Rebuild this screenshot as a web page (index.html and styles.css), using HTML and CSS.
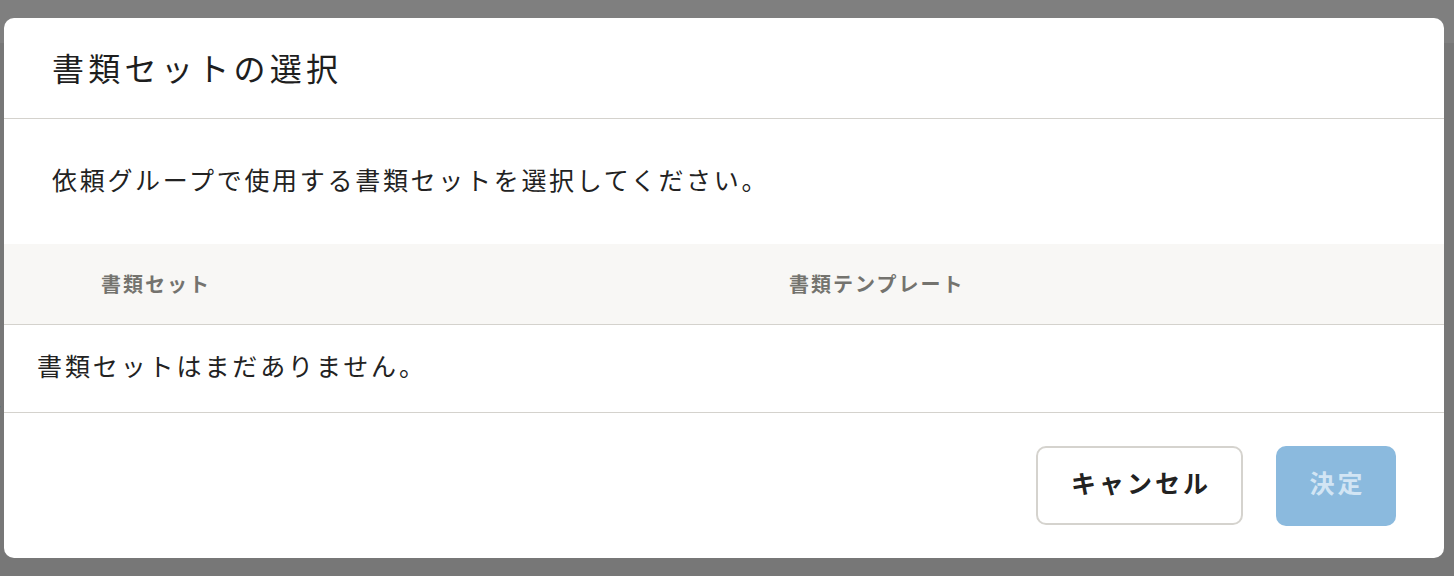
FILE: index.html
```html
<!DOCTYPE html>
<html lang="ja">

<head>
    <meta charset="UTF-8">
    <title>書類セットの選択</title>
    <link rel="stylesheet" href="styles.css">
</head>

<body>

    <div class="page">
        <div class="page-header"></div>
        <div class="page-body">
            <p class="page-line page-line-1">書類を選択します</p>
            <p class="page-line page-line-2">ありません</p>
        </div>
    </div>

    <div class="overlay">
        <div class="modal">
            <div class="modal-header">
                <h2>書類セットの選択</h2>
            </div>
            <p class="modal-intro">依頼グループで使用する書類セットを選択してください。</p>
            <div class="set-table">
                <div class="set-head">
                    <div class="set-col">書類セット</div>
                    <div class="set-col">書類テンプレート</div>
                </div>
                <div class="set-empty">書類セットはまだありません。</div>
            </div>
            <div class="modal-footer">
                <button type="button" class="btn btn-cancel">キャンセル</button>
                <button type="button" class="btn btn-primary" disabled>決定</button>
            </div>
        </div>
    </div>

</body>

</html>
```

FILE: styles.css
```css
body {
    margin: 0;
    padding: 0;
    font-family: "Noto Sans CJK JP", "Noto Sans", sans-serif;
    color: #222222;
    height: 576px;
    overflow: hidden;
}

.page {
    height: 576px;
    background-color: #eeeeee;
}

.page-header {
    height: 43px;
    background-color: #ffffff;
}

.page-body {
    padding-top: 226px;
}

.page-line {
    margin: 0 0 0 -220px;
    font-size: 24px;
    color: #222222;
}

.page-line-2 {
    margin-top: 80px;
    margin-left: -118px;
}

.overlay {
    position: absolute;
    top: 0;
    left: 0;
    right: 0;
    bottom: 0;
    background-color: rgba(0, 0, 0, 0.5);
}

.modal {
    position: absolute;
    top: 18px;
    left: 4px;
    width: 1440px;
    height: 540px;
    background-color: #ffffff;
    border-radius: 10px;
    overflow: hidden;
    display: flex;
    flex-direction: column;
}

.modal-header {
    height: 100px;
    border-bottom: 1px solid #d4d2cd;
    display: flex;
    align-items: center;
    padding-left: 48px;
}

.modal-header h2 {
    margin: 0 0 2px;
    font-size: 32px;
    font-weight: normal;
    letter-spacing: 4.3px;
    line-height: 40px;
    color: #1e1e1e;
}

.modal-intro {
    margin: 0;
    padding: 46px 48px 50px;
    font-size: 25px;
    line-height: 29px;
    letter-spacing: 2.7px;
}

.set-head {
    height: 79px;
    padding-bottom: 1px;
    display: grid;
    grid-template-columns: 688px 1fr;
    align-items: center;
    padding-left: 97px;
    background-color: #f8f7f5;
    border-bottom: 1px solid #d4d2cd;
}

.set-col {
    font-size: 20px;
    font-weight: bold;
    letter-spacing: 2px;
    color: #74736e;
}

.set-empty {
    height: 80px;
    padding-bottom: 7px;
    display: flex;
    align-items: center;
    padding-left: 33px;
    font-size: 25px;
    letter-spacing: 2.9px;
    border-bottom: 1px solid #d4d2cd;
}

.modal-footer {
    flex: 1;
    display: flex;
    justify-content: flex-end;
    align-items: center;
    gap: 33px;
    padding-right: 48px;
}

.btn {
    font-family: inherit;
    font-size: 25px;
    font-weight: bold;
    letter-spacing: 3px;
    border-radius: 10px;
    padding: 0 0 8px 3px;
    cursor: pointer;
}

.btn-cancel {
    width: 207px;
    height: 79px;
    background-color: #ffffff;
    border: 2px solid #d5d3ce;
    color: #222222;
}

.btn-primary {
    width: 120px;
    height: 80px;
    background-color: #8bbade;
    border: none;
    color: #d2e5f4;
}
```
